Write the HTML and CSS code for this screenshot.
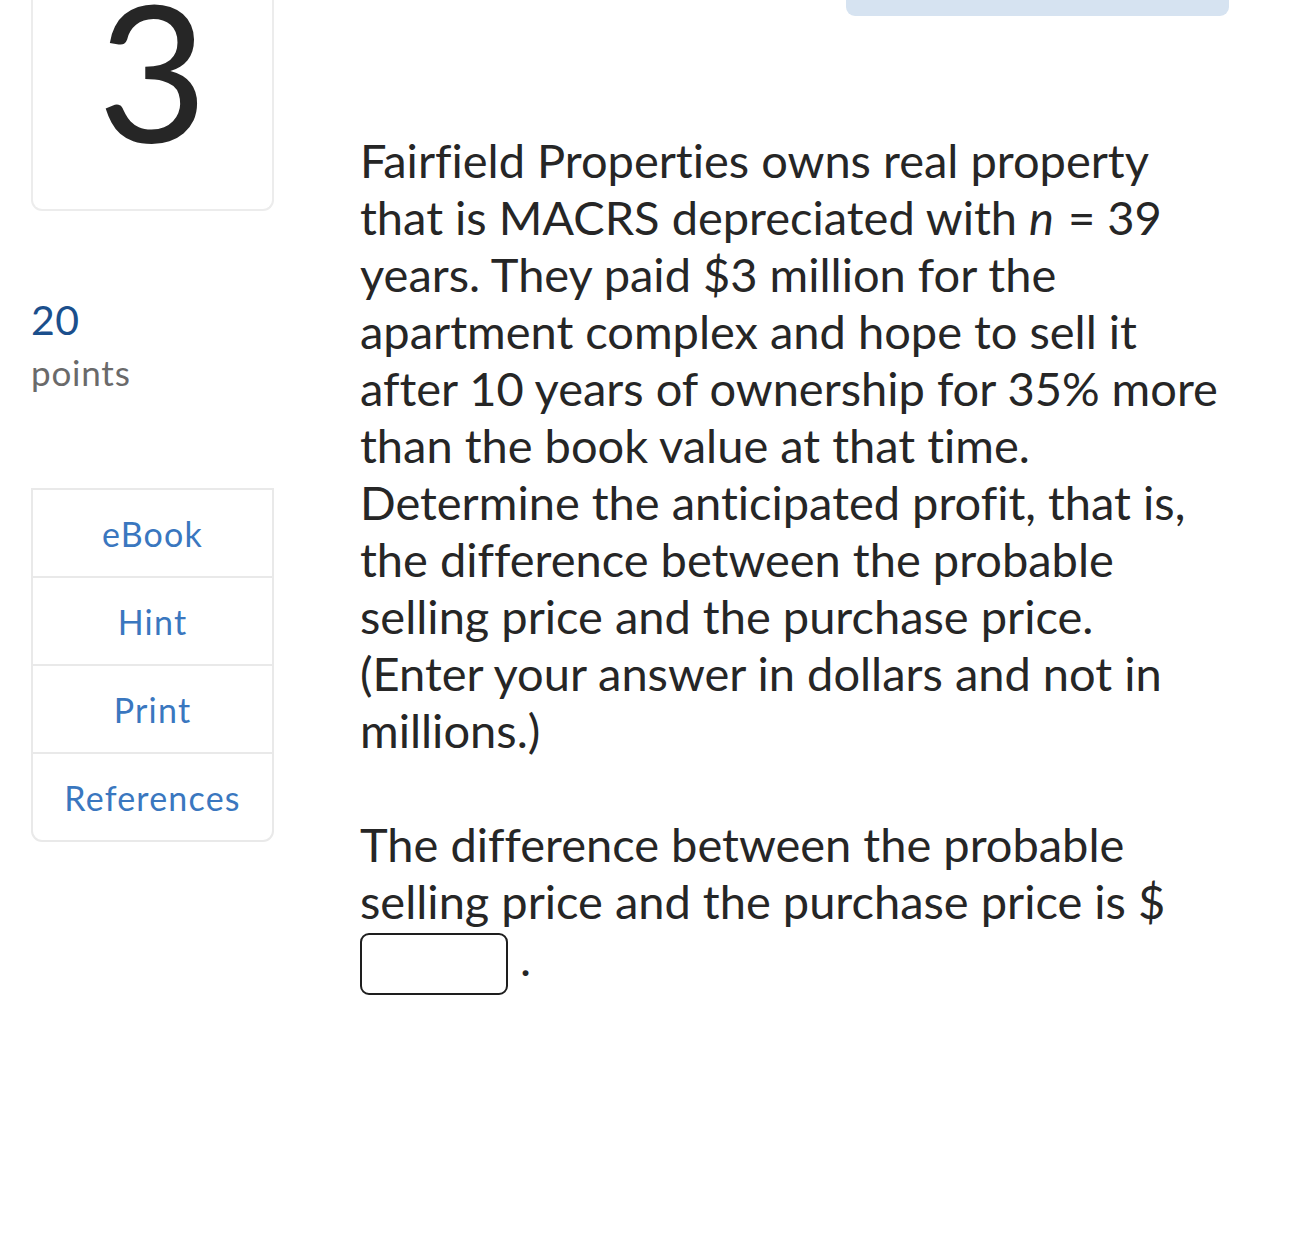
FILE: index.html
```html
<!DOCTYPE html>
<html lang="en">
<head>
<meta charset="utf-8">
<title>Question 3</title>
<link rel="stylesheet" href="styles.css">
</head>
<body>
<div class="page">
  <aside class="sidebar">
    <div class="qnum"><span class="qnum-digit">3</span></div>
    <div class="points">
      <div class="points-value">20</div>
      <div class="points-label">points</div>
    </div>
    <ul class="tools">
      <li class="tool"><a href="#">eBook</a></li>
      <li class="tool"><a href="#">Hint</a></li>
      <li class="tool"><a href="#">Print</a></li>
      <li class="tool"><a href="#">References</a></li>
    </ul>
  </aside>
  <main class="main">
    <div class="toolbar"></div>
    <p class="prompt">Fairfield Properties owns real property that is MACRS depreciated with <i class="var">n</i>= 39 years. They paid $3 million for the apartment complex and hope to sell it after 10 years of ownership for 35% more than the book value at that time. Determine the anticipated profit, that is, the difference between the probable selling price and the purchase price. (Enter your answer in dollars and not in millions.)</p>
    <p class="prompt">The difference between the probable selling price and the purchase price is $ <input class="answer" type="text" aria-label="answer"> .</p>
  </main>
</div>
</body>
</html>
```
FILE: styles.css
```css
html, body {
  margin: 0;
  padding: 0;
  background: #ffffff;
}

body {
  font-family: Lato, "Noto Sans", sans-serif;
  color: #262626;
  font-variant-ligatures: none;
}

.page {
  display: flex;
  align-items: flex-start;
  padding-left: 31px;
}

.sidebar {
  width: 243px;
  flex: none;
  display: flex;
  flex-direction: column;
}

.qnum {
  box-sizing: border-box;
  height: 211px;
  border: 2px solid #ececec;
  border-top: none;
  border-radius: 0 0 11px 11px;
  text-align: center;
  overflow: hidden;
}

.qnum-digit {
  display: block;
  font-size: 190px;
  line-height: 190px;
  margin-top: -27px;
  color: #262626;
}

.points {
  margin-top: 85px;
}

.points-value {
  font-size: 41px;
  line-height: 48px;
  color: #1b4f8c;
  letter-spacing: 0.5px;
}

.points-label {
  margin-top: 8px;
  font-size: 35px;
  line-height: 40px;
  color: #6a6a6a;
  letter-spacing: 0.8px;
}

.tools {
  list-style: none;
  margin: 96px 0 0 0;
  padding: 0;
  border: 2px solid #e9e9e9;
  border-radius: 0 0 11px 11px;
}

.tool {
  height: 86px;
  display: flex;
  align-items: center;
  justify-content: center;
  border-top: 2px solid #e9e9e9;
}

.tool:first-child {
  border-top: none;
}

.tool a {
  font-size: 34px;
  letter-spacing: 1.2px;
  color: #3a77bf;
  text-decoration: none;
}

.main {
  width: 869px;
  margin-left: 86px;
  flex: none;
  display: flex;
  flex-direction: column;
}

.toolbar {
  align-self: flex-end;
  width: 383px;
  height: 16px;
  background: #d6e3f1;
  border-radius: 0 0 9px 9px;
}

.prompt {
  width: 862px;
  margin: 57px 0 0 0;
  font-size: 47px;
  line-height: 57px;
}

.toolbar + .prompt {
  margin-top: 116px;
}

.var {
  display: inline-block;
  padding-right: 14px;
}

.answer {
  box-sizing: border-box;
  width: 148px;
  height: 62px;
  border: 2.5px solid #1e1e1e;
  border-radius: 9px;
  vertical-align: middle;
  font: inherit;
  padding: 0 8px;
  background: #ffffff;
}
```
